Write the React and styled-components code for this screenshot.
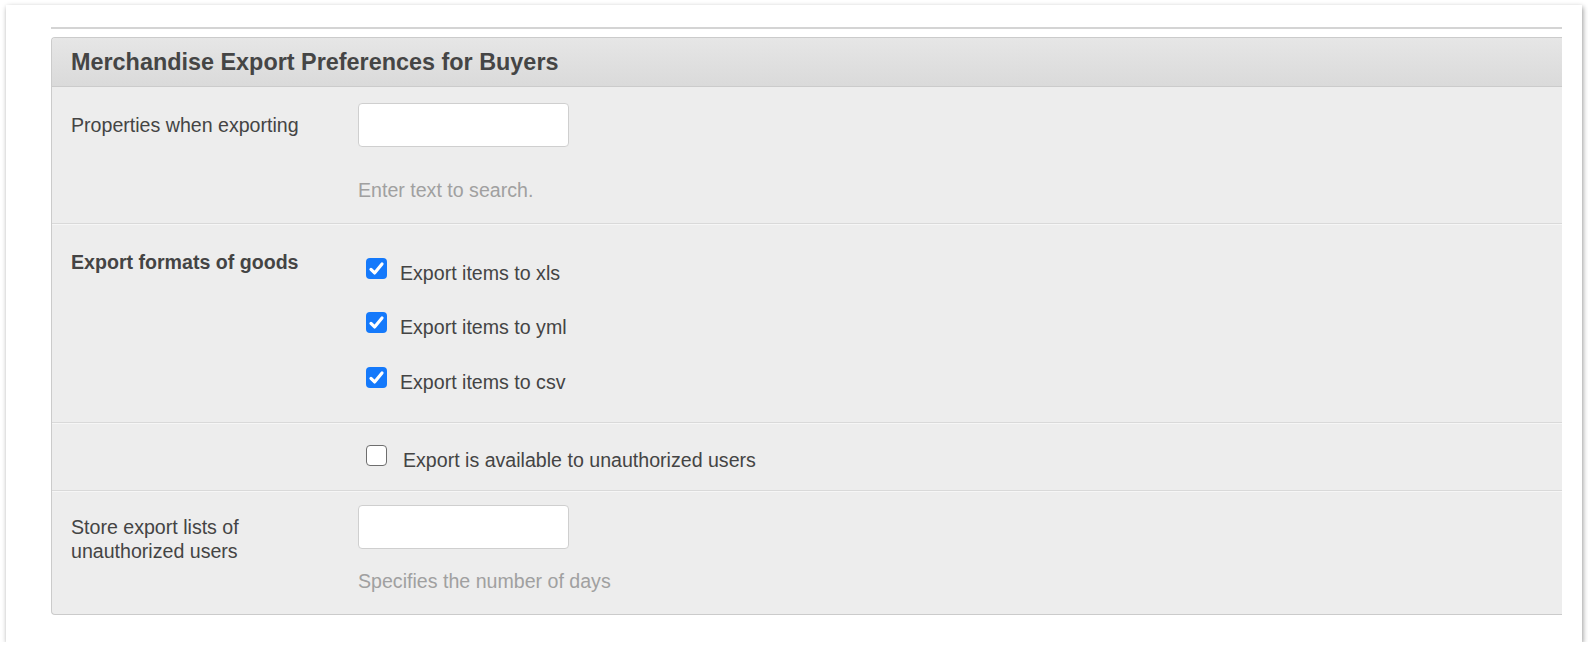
import React from "react";
import styled, { createGlobalStyle } from "styled-components";

const Global = createGlobalStyle`
  html, body { margin: 0; padding: 0; background: #fff; }
  body { font-family: "Liberation Sans", Arial, sans-serif; color: #444; }
  * { box-sizing: border-box; }
`;

const Card = styled.div`
  margin: 5px 0 0 6px;
  width: 1576px;
  height: 637px;
  background: #fff;
  box-shadow: 1px 2px 5px rgba(0, 0, 0, 0.4);
  padding: 22px 20px 0 45px;
  overflow: hidden;
`;

const TopRule = styled.div`
  height: 2px;
  background: #d4d4d4;
  margin-bottom: 8px;
`;

const Panel = styled.section`
  background: #ededed;
  border: 1px solid #cbcbcb;
  border-right: none;
  border-radius: 4px 0 0 4px;
  overflow: hidden;
`;

const Header = styled.h2`
  margin: 0;
  height: 49px;
  display: flex;
  align-items: center;
  padding: 1px 0 0 19px;
  background: linear-gradient(#e6e6e6, #dadada);
  border-bottom: 1px solid #cbcbcb;
  font-size: 23.4px;
  font-weight: bold;
  color: #454545;
`;

const Row = styled.div`
  display: grid;
  grid-template-columns: 287px 1fr;
  padding: ${(p) => p.$pad};
  padding-left: 19px;
  border-top: ${(p) => (p.$first ? "none" : "1px solid #d9d9d9")};
  box-shadow: ${(p) => (p.$first ? "none" : "inset 0 1px 0 #f6f6f6")};
  font-size: 19.6px;
  line-height: 24.5px;
`;

const Label = styled.div`
  margin-top: ${(p) => p.$top || 0}px;
  font-weight: ${(p) => (p.$bold ? "bold" : "normal")};
  color: #444;
`;

const Field = styled.div`
  display: flex;
  flex-direction: column;
  align-items: flex-start;
`;

const TextInput = styled.input`
  width: 211px;
  height: 44px;
  border: 1px solid #cfcfcf;
  border-radius: 4px;
  background: #fff;
  font: inherit;
  padding: 0 10px;
  outline: none;
`;

const Help = styled.div`
  margin-top: ${(p) => p.$gap}px;
  color: #a0a0a0;
`;

const Checks = styled.div`
  display: flex;
  flex-direction: column;
  gap: 27px;
  padding-left: 8px;
`;

const CheckItem = styled.label`
  display: flex;
  align-items: flex-start;
  gap: ${(p) => p.$gap}px;
  color: #444;
`;

const Box = styled.span`
  flex: none;
  width: 21px;
  height: 21px;
  border-radius: 4px;
  display: flex;
  align-items: center;
  justify-content: center;
  background: ${(p) => (p.$on ? "#1479fb" : "#fff")};
  border: ${(p) => (p.$on ? "none" : "1.5px solid #6e6e6e")};
`;

const CheckText = styled.span`
  margin-top: ${(p) => p.$top}px;
`;

function Check({ on, text, gap = 13, top = 3 }) {
  return (
    <CheckItem $gap={gap}>
      <Box $on={on}>
        {on && (
          <svg width="17" height="17" viewBox="0 0 16 16">
            <path
              d="M2.8 8.8 L6.2 12.2 L13.2 3.8"
              fill="none"
              stroke="#fff"
              strokeWidth="3"
              strokeLinecap="round"
              strokeLinejoin="round"
            />
          </svg>
        )}
      </Box>
      <CheckText $top={top}>{text}</CheckText>
    </CheckItem>
  );
}

export default function App() {
  return (
    <>
      <Global />
      <Card>
        <TopRule />
        <Panel>
          <Header>Merchandise Export Preferences for Buyers</Header>
          <Row $first $pad="16px 0 20px">
            <Label $top={10}>Properties when exporting</Label>
            <Field>
              <TextInput />
              <Help $gap={31}>Enter text to search.</Help>
            </Field>
          </Row>
          <Row $pad="34px 0 28px">
            <Label $bold $top={-8}>Export formats of goods</Label>
            <Checks>
              <Check on text="Export items to xls" />
              <Check on text="Export items to yml" />
              <Check on text="Export items to csv" />
            </Checks>
          </Row>
          <Row $pad="22px 0 17px">
            <Label />
            <Checks>
              <Check on={false} gap={16} top={3} text="Export is available to unauthorized users" />
            </Checks>
          </Row>
          <Row $pad="14px 0 21px">
            <Label $top={10}>
              Store export lists of
              <br />
              unauthorized users
            </Label>
            <Field>
              <TextInput />
              <Help $gap={20}>Specifies the number of days</Help>
            </Field>
          </Row>
        </Panel>
      </Card>
    </>
  );
}
